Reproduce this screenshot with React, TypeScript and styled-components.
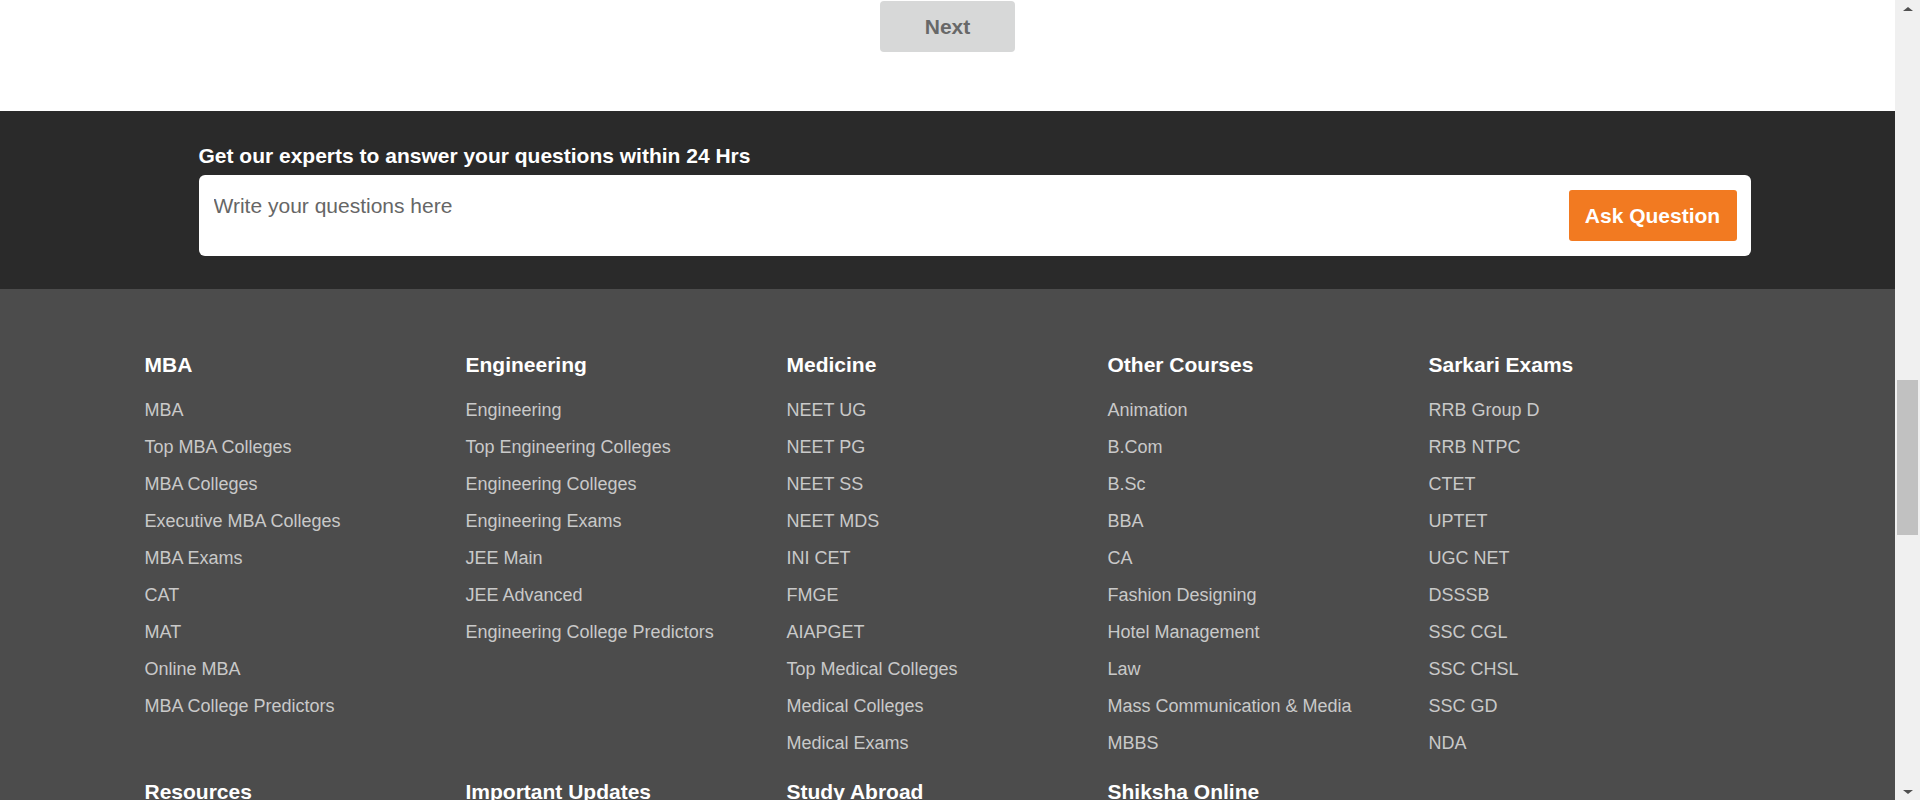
import React from "react";
import styled, { createGlobalStyle } from "styled-components";

const GlobalStyle = createGlobalStyle`
  body {
    margin: 0;
    font-family: "Liberation Sans", Arial, sans-serif;
    overflow: hidden;
  }
`;

const Page = styled.div`
  display: flex;
  height: 800px;
  width: 100vw;
`;

const Main = styled.div`
  flex: 1;
  min-width: 0;
  display: flex;
  flex-direction: column;
  overflow: hidden;
`;

const NextSection = styled.section`
  height: 111px;
  flex-shrink: 0;
  box-sizing: border-box;
  padding-top: 1px;
  background: #ffffff;
  display: flex;
  justify-content: center;
  align-items: flex-start;
`;

const NextButton = styled.button`
  width: 135px;
  height: 51px;
  border: none;
  border-radius: 4px;
  background: #d7d8d8;
  color: #686868;
  font-family: inherit;
  font-size: 21px;
  font-weight: 700;
  cursor: pointer;
`;

const AskSection = styled.section`
  height: 178px;
  flex-shrink: 0;
  box-sizing: border-box;
  padding-top: 33px;
  background: #2a2a2a;
`;

const AskInner = styled.div`
  width: 1606px;
  margin: 0 auto;
  padding-left: 54px;
  box-sizing: border-box;
`;

const AskTitle = styled.h3`
  margin: 0 0 7px;
  font-size: 21px;
  line-height: 24px;
  font-weight: 700;
  color: #ffffff;
`;

const AskBox = styled.div`
  height: 81px;
  box-sizing: border-box;
  padding: 0 14px 0 15px;
  background: #ffffff;
  border-radius: 6px;
  display: flex;
  align-items: center;
  gap: 14px;
`;

const QuestionField = styled.textarea`
  flex: 1;
  height: 100%;
  box-sizing: border-box;
  padding: 19px 0 0;
  border: none;
  outline: none;
  resize: none;
  background: transparent;
  font-family: inherit;
  font-size: 21px;
  line-height: 24px;
  color: #555555;

  &::placeholder {
    color: #666666;
  }
`;

const AskButton = styled.button`
  width: 168px;
  height: 51px;
  flex-shrink: 0;
  border: none;
  border-radius: 3px;
  background: #f27a21;
  color: #ffffff;
  font-family: inherit;
  font-size: 21px;
  font-weight: 700;
  cursor: pointer;
`;

const Footer = styled.footer`
  flex: 1;
  padding-top: 64px;
  background: #4c4c4c;
`;

const FooterGrid = styled.div`
  width: 1606px;
  margin: 0 auto;
  display: grid;
  grid-template-columns: repeat(5, 321px);
  row-gap: 18px;
`;

const Column = styled.div`
  display: flex;
  flex-direction: column;
`;

const ColumnTitle = styled.h4`
  margin: 0 0 15px;
  font-size: 21px;
  line-height: 24px;
  font-weight: 700;
  color: #ffffff;
`;

const LinkList = styled.ul`
  list-style: none;
  margin: 0;
  padding: 0;
`;

const LinkItem = styled.a`
  display: block;
  font-size: 18px;
  line-height: 37px;
  color: #c9c9c9;
  text-decoration: none;
  white-space: nowrap;
`;

const Scrollbar = styled.div`
  width: 25px;
  flex-shrink: 0;
  background: #f0f0f0;
  display: flex;
  flex-direction: column;
`;

const ScrollArrow = styled.div<{ $down?: boolean }>`
  height: 17px;
  display: flex;
  justify-content: center;
  align-items: center;

  &::before {
    content: "";
    width: 0;
    height: 0;
    border-left: 5px solid transparent;
    border-right: 5px solid transparent;
    ${(p) =>
      p.$down
        ? "border-top: 4px solid #505050;"
        : "border-bottom: 4px solid #505050;"}
  }
`;

const ScrollTrack = styled.div`
  flex: 1;
  padding: 0 2px;
`;

const ScrollThumb = styled.div`
  margin-top: 363px;
  height: 155px;
  background: #c1c1c1;
`;

const columns = [
  {
    title: "MBA",
    links: [
      "MBA",
      "Top MBA Colleges",
      "MBA Colleges",
      "Executive MBA Colleges",
      "MBA Exams",
      "CAT",
      "MAT",
      "Online MBA",
      "MBA College Predictors",
    ],
  },
  {
    title: "Engineering",
    links: [
      "Engineering",
      "Top Engineering Colleges",
      "Engineering Colleges",
      "Engineering Exams",
      "JEE Main",
      "JEE Advanced",
      "Engineering College Predictors",
    ],
  },
  {
    title: "Medicine",
    links: [
      "NEET UG",
      "NEET PG",
      "NEET SS",
      "NEET MDS",
      "INI CET",
      "FMGE",
      "AIAPGET",
      "Top Medical Colleges",
      "Medical Colleges",
      "Medical Exams",
    ],
  },
  {
    title: "Other Courses",
    links: [
      "Animation",
      "B.Com",
      "B.Sc",
      "BBA",
      "CA",
      "Fashion Designing",
      "Hotel Management",
      "Law",
      "Mass Communication & Media",
      "MBBS",
    ],
  },
  {
    title: "Sarkari Exams",
    links: [
      "RRB Group D",
      "RRB NTPC",
      "CTET",
      "UPTET",
      "UGC NET",
      "DSSSB",
      "SSC CGL",
      "SSC CHSL",
      "SSC GD",
      "NDA",
    ],
  },
  { title: "Resources", links: [] },
  { title: "Important Updates", links: [] },
  { title: "Study Abroad", links: [] },
  { title: "Shiksha Online", links: [] },
];

export default function App() {
  return (
    <>
      <GlobalStyle />
      <Page>
        <Main>
          <NextSection>
            <NextButton>Next</NextButton>
          </NextSection>
          <AskSection>
            <AskInner>
              <AskTitle>Get our experts to answer your questions within 24 Hrs</AskTitle>
              <AskBox>
                <QuestionField placeholder="Write your questions here" />
                <AskButton>Ask Question</AskButton>
              </AskBox>
            </AskInner>
          </AskSection>
          <Footer>
            <FooterGrid>
              {columns.map((col) => (
                <Column key={col.title}>
                  <ColumnTitle>{col.title}</ColumnTitle>
                  <LinkList>
                    {col.links.map((link) => (
                      <li key={link}>
                        <LinkItem href="#">{link}</LinkItem>
                      </li>
                    ))}
                  </LinkList>
                </Column>
              ))}
            </FooterGrid>
          </Footer>
        </Main>
        <Scrollbar>
          <ScrollArrow />
          <ScrollTrack>
            <ScrollThumb />
          </ScrollTrack>
          <ScrollArrow $down />
        </Scrollbar>
      </Page>
    </>
  );
}
